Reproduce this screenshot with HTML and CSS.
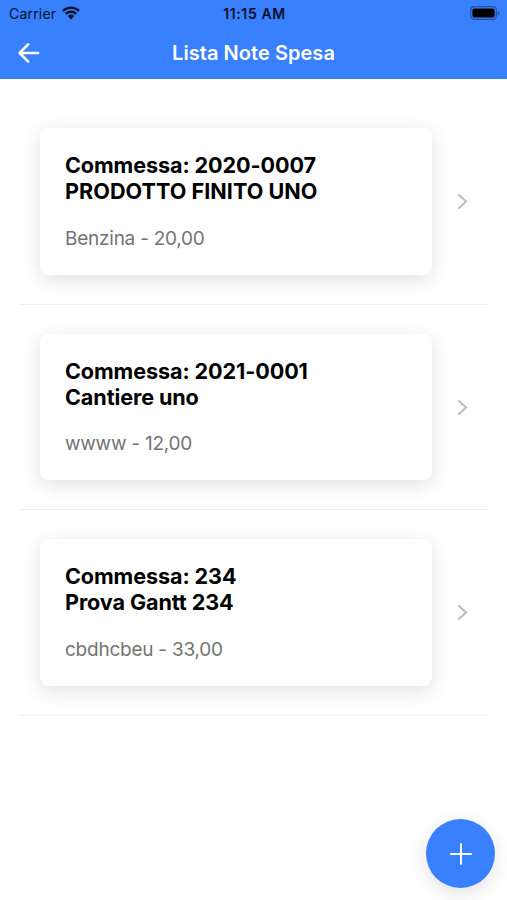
FILE: index.html
```html
<!DOCTYPE html>
<html lang="it">
<head>
<meta charset="utf-8">
<title>Lista Note Spesa</title>
<link rel="stylesheet" href="styles.css">
</head>
<body>
<div class="app">
  <header class="header">
    <div class="status">
      <div class="carrier"><span>Carrier</span>
        <svg class="wifi" viewBox="0 0 18 14"><path d="M1 4.8a11.6 11.6 0 0 1 16 0M3.8 7.8a7.6 7.6 0 0 1 10.4 0" fill="none" stroke="currentColor" stroke-width="2.3"/><path d="M5.8 10a4.7 4.7 0 0 1 6.4 0L9 13.4z" fill="currentColor"/></svg>
      </div>
      <span class="time">11:15 AM</span>
      <div class="power"><svg class="battery" viewBox="0 0 30 14"><rect x=".7" y=".7" width="25.6" height="12.6" rx="3.5" fill="none" stroke="currentColor" stroke-opacity=".38" stroke-width="1.2"/><rect x="2.4" y="2.4" width="22.2" height="9.2" rx="2" fill="currentColor"/><path d="M27.7 5v4q1.7-.6 1.7-2t-1.7-2" fill="currentColor" fill-opacity=".4"/></svg></div>
    </div>
    <div class="toolbar">
      <svg class="back" viewBox="0 0 22 20"><path d="M10.2 1.4 1.6 10l8.6 8.6M2 10h18.2" fill="none" stroke="currentColor" stroke-width="2.5" stroke-linecap="round" stroke-linejoin="round"/></svg>
      <h1 class="title">Lista Note Spesa</h1>
    </div>
  </header>
  <main class="list">
    <article class="item">
      <div class="card"><h2>Commessa: 2020-0007<br><span class="caps">PRODOTTO FINITO UNO</span></h2><p>Benzina - 20,00</p></div>
      <svg class="chevron" viewBox="0 0 11 17"><path d="m1.4 1.4 7.7 7.1-7.7 7.1" fill="none" stroke="currentColor" stroke-width="2"/></svg>
    </article>
    <article class="item">
      <div class="card"><h2>Commessa: 2021-0001<br>Cantiere uno</h2><p>wwww - 12,00</p></div>
      <svg class="chevron" viewBox="0 0 11 17"><path d="m1.4 1.4 7.7 7.1-7.7 7.1" fill="none" stroke="currentColor" stroke-width="2"/></svg>
    </article>
    <article class="item">
      <div class="card"><h2>Commessa: 234<br>Prova Gantt 234</h2><p>cbdhcbeu - 33,00</p></div>
      <svg class="chevron" viewBox="0 0 11 17"><path d="m1.4 1.4 7.7 7.1-7.7 7.1" fill="none" stroke="currentColor" stroke-width="2"/></svg>
    </article>
  </main>
  <button class="fab" aria-label="Aggiungi"><svg viewBox="0 0 22 22"><path d="M11 1v20M1 11h20" fill="none" stroke="currentColor" stroke-width="2" stroke-linecap="round"/></svg></button>
</div>
</body>
</html>
```
FILE: styles.css
```css
* { box-sizing: border-box; }
body { margin: 0; background: #fff; font-family: Inter, "Liberation Sans", sans-serif; }
.app { position: relative; height: 900px; overflow: hidden; }
.header { height: 79px; background: #3880ff; color: #fff; }
.status { display: grid; grid-template-columns: 1fr auto 1fr; height: 27px; padding: 0 7px 0 9px; align-items: center; color: #071126; font-size: 14px; }
.carrier { display: flex; align-items: center; gap: 6px; letter-spacing: .2px; }
.wifi { width: 18px; height: 14px; margin-top: -2px; }
.time { font-weight: 600; letter-spacing: .6px; }
.power { display: flex; justify-content: flex-end; color: #000; }
.battery { width: 30px; height: 14px; margin-top: -1px; }
.toolbar { display: grid; grid-template-columns: 22px 1fr 22px; align-items: center; height: 51px; padding: 0 18px; }
.back { width: 22px; height: 20px; }
.title { margin: 0; text-align: center; font-size: 20px; font-weight: 600; line-height: 24px; letter-spacing: .05px; }
.list { padding: 20px 19px 0 20px; }
.item { display: flex; align-items: center; height: 205.7px; padding-left: 20px; border-bottom: 1.4px solid #eee; }
.card { width: 392px; height: 146.6px; padding: 25px; border-radius: 8px; background: #fff; box-shadow: 0 5px 20px rgba(0, 0, 0, .12); }
.card h2 { margin: 0; color: #000; font-size: 21.6px; font-weight: 700; line-height: 25.8px; letter-spacing: -.1px; }
.card .caps { letter-spacing: .03px; }
.card p { margin: 20px 0 0; color: #737373; font-size: 19px; line-height: 28px; letter-spacing: -.24px; }
.chevron { width: 11px; height: 17px; margin-left: 25px; color: #bcbcbc; }
.fab { position: absolute; right: 12px; bottom: 12px; display: flex; align-items: center; justify-content: center; width: 69px; height: 69px; padding: 0; border: 0; border-radius: 50%; background: #3880ff; color: #fff; box-shadow: 0 5px 20px rgba(0, 0, 0, .12); }
.fab svg { width: 22px; height: 22px; }
```
